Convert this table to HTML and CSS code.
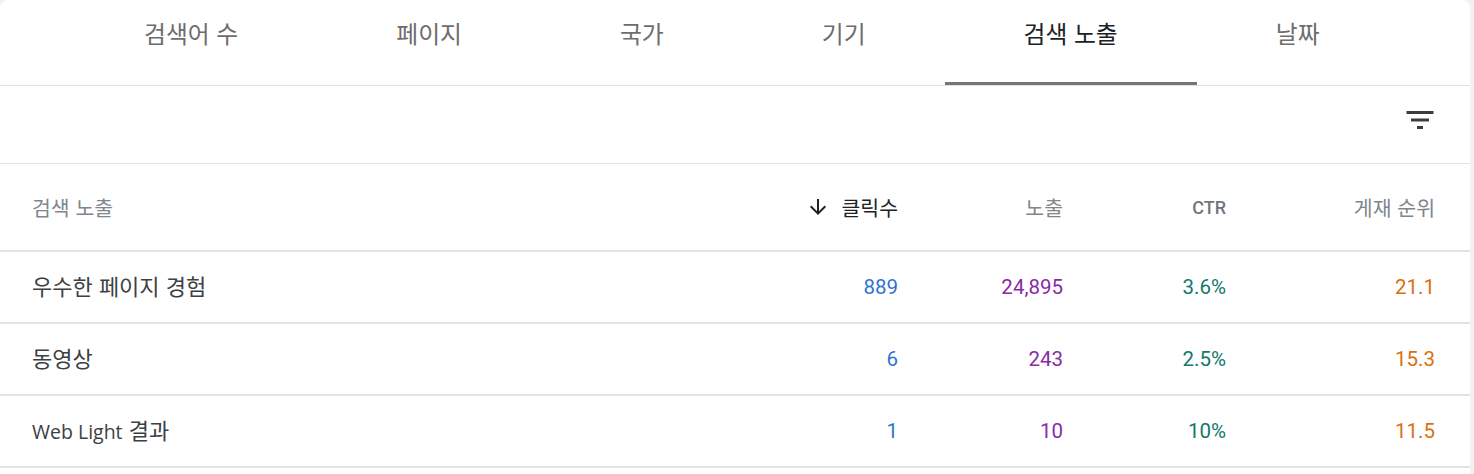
FILE: index.html
```html
<!DOCTYPE html>
<html lang="ko">
<head>
<meta charset="utf-8">
<title>검색 노출</title>
<link rel="stylesheet" href="styles.css">
</head>
<body>
<div class="card">
  <nav class="tabs">
    <div class="tab">검색어 수</div>
    <div class="tab">페이지</div>
    <div class="tab">국가</div>
    <div class="tab">기기</div>
    <div class="tab active">검색 노출</div>
    <div class="tab">날짜</div>
  </nav>
  <div class="toolbar">
    <svg class="filter" viewBox="0 0 24 24" width="36" height="36"><path d="M10 18h4v-2h-4v2zM3 6v2h18V6H3zm3 7h12v-2H6v2z"/></svg>
  </div>
  <div class="grid head">
    <div class="name">검색 노출</div>
    <div class="num sorted"><svg class="arrow" viewBox="0 0 24 24" width="24" height="24"><path d="M20 12l-1.41-1.41L13 16.17V4h-2v12.17l-5.58-5.59L4 12l8 8 8-8z"/></svg>클릭수</div>
    <div class="num">노출</div>
    <div class="num ctr">CTR</div>
    <div class="num">게재 순위</div>
  </div>
  <div class="grid row">
    <div class="name">우수한 페이지 경험</div>
    <div class="num clicks">889</div>
    <div class="num impr">24,895</div>
    <div class="num rate">3.6%</div>
    <div class="num pos">21.1</div>
  </div>
  <div class="grid row">
    <div class="name">동영상</div>
    <div class="num clicks">6</div>
    <div class="num impr">243</div>
    <div class="num rate">2.5%</div>
    <div class="num pos">15.3</div>
  </div>
  <div class="grid row">
    <div class="name"><span class="latin">Web Light</span> 결과</div>
    <div class="num clicks">1</div>
    <div class="num impr">10</div>
    <div class="num rate">10%</div>
    <div class="num pos">11.5</div>
  </div>
</div>
</body>
</html>
```

FILE: styles.css
```css
html, body {
  margin: 0;
  padding: 0;
}
body {
  background: #f1f2f3;
  font-family: "Noto Sans CJK KR", Roboto, sans-serif;
  color: #202124;
  height: 474px;
  overflow: hidden;
}
.card {
  width: 1470px;
  background: #fff;
  border-radius: 8px 8px 0 0;
  min-height: 474px;
}
.tabs {
  display: flex;
  padding-left: 65px;
  height: 85px;
  border-bottom: 1px solid #e0e0e0;
}
.tab {
  box-sizing: border-box;
  height: 85px;
  padding: 16px 79px 0;
  font-size: 23.8px;
  line-height: 34px;
  color: #6d6d6d;
  border-bottom: 3px solid transparent;
  white-space: nowrap;
}
.tab.active {
  color: #202124;
  border-bottom-color: #757575;
}
.toolbar {
  display: flex;
  justify-content: flex-end;
  align-items: flex-start;
  padding-right: 32px;
  border-bottom: 1px solid #e3e3e3;
  box-sizing: border-box;
  height: 78px;
}
.filter {
  margin-top: 16px;
  fill: #3c3c3c;
}
.grid {
  display: grid;
  grid-template-columns: 1fr 160px 165px 163px 209px;
  padding: 0 35px 0 32px;
  align-items: center;
  border-bottom: 2px solid #e3e3e3;
}
.head {
  box-sizing: border-box;
  height: 88px;
  font-size: 20.5px;
  color: #80868b;
}
.row {
  height: 70px;
}
.num {
  text-align: right;
  display: flex;
  justify-content: flex-end;
  align-items: center;
}
.head .sorted {
  color: #202124;
}
.arrow {
  fill: #202124;
  margin-right: 11px;
}
.head .ctr {
  font-family: Roboto, sans-serif;
  font-weight: 500;
  font-size: 18px;
  color: #70757a;
}
.row .name {
  font-family: "Noto Sans CJK KR", sans-serif;
  font-size: 22px;
  color: #3c4043;
  padding-bottom: 5px;
}
.row .name .latin {
  font-family: "Open Sans", sans-serif;
  font-size: 19.5px;
}
.row .num {
  font-family: Roboto, sans-serif;
  font-size: 20.5px;
}
.clicks { color: #2f74d0; }
.impr { color: #8a2ba6; }
.rate { color: #12796b; }
.pos { color: #d9700f; }
```
